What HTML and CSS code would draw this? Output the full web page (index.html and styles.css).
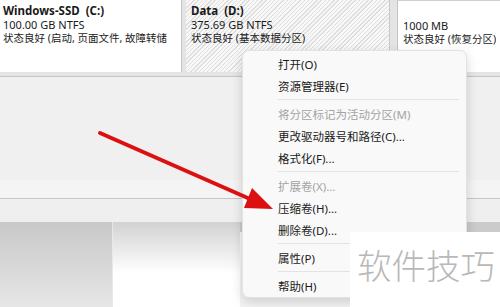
FILE: index.html
```html
<!DOCTYPE html>
<html lang="zh-CN">

<head>
    <meta charset="UTF-8">
    <meta name="viewport" content="width=device-width, initial-scale=1.0">
    <title>磁盘管理</title>
    <link rel="stylesheet" href="styles.css">
</head>

<body>
    <div class="screen">

        <div class="disks">
            <div class="part part-c">
                <div class="name">Windows-SSD&nbsp; (C:)</div>
                <div class="size">100.00 GB NTFS</div>
                <div class="state">状态良好 (启动, 页面文件, 故障转储</div>
            </div>
            <div class="part part-d">
                <div class="name">Data&nbsp; (D:)</div>
                <div class="size">375.69 GB NTFS</div>
                <div class="state">状态良好 (基本数据分区)</div>
            </div>
            <div class="part part-r">
                <div class="name">&nbsp;</div>
                <div class="size">1000 MB</div>
                <div class="state">状态良好 (恢复分区)</div>
            </div>
        </div>

        <div class="panel"></div>
        <div class="band"></div>
        <div class="band2"></div>

        <div class="lower">
            <div class="lower-a"></div>
            <div class="lower-b"></div>
            <div class="lower-c"></div>
        </div>

        <ul class="menu">
            <li class="item">打开(O)</li>
            <li class="item">资源管理器(E)</li>
            <li class="sep"></li>
            <li class="item off">将分区标记为活动分区(M)</li>
            <li class="item">更改驱动器号和路径(C)...</li>
            <li class="item">格式化(F)...</li>
            <li class="sep"></li>
            <li class="item off">扩展卷(X)...</li>
            <li class="item">压缩卷(H)...</li>
            <li class="item">删除卷(D)...</li>
            <li class="sep"></li>
            <li class="item">属性(P)</li>
            <li class="sep"></li>
            <li class="item">帮助(H)</li>
        </ul>

        <div class="watermark">软件技巧</div>

        <svg class="arrow" viewBox="0 0 500 307" width="500" height="307">
            <line x1="100" y1="133" x2="250" y2="199" stroke="#dc1010" stroke-width="4" stroke-linecap="round" />
            <polygon points="273,209 244,208 252,188" fill="#dc1010" />
        </svg>

    </div>
</body>

</html>
```

FILE: styles.css
```css
* {
    box-sizing: border-box;
}

body {
    margin: 0;
    background-color: #f0f0f0;
    font-family: "Noto Sans", "Noto Sans CJK SC", sans-serif;
    color: #1a1a1a;
}

.screen {
    position: relative;
    width: 500px;
    height: 307px;
    overflow: hidden;
}

.disks {
    display: flex;
    height: 77px;
    background-color: #e4e4e4;
    border-bottom: 1px solid #c6c6c6;
}

.part {
    height: 72px;
    padding: 4px 4px 0 4px;
    white-space: nowrap;
    overflow: hidden;
}

.part .name {
    height: 14px;
    font-weight: bold;
    font-size: 11.5px;
    line-height: 14px;
}

.part .size {
    height: 14px;
    font-size: 11px;
    line-height: 14px;
}

.part .state {
    height: 12px;
    font-size: 10.5px;
    line-height: 12px;
    overflow: hidden;
}

.part-c {
    width: 182px;
    padding-left: 3px;
    background-color: #fff;
    border-right: 1px solid #c4c4c4;
}

.part-d {
    width: 204px;
    margin-left: 4px;
    padding-left: 5px;
    background: repeating-linear-gradient(-45deg, #f8f8f8 0 2px, #dedede 2px 3px);
    border-right: 1px solid #c8c8c8;
}

.part-r {
    flex: 1;
    margin-left: 7px;
    padding-left: 5px;
    background-color: #fff;
    border-left: 1px solid #c4c4c4;
    border-top: 1px solid #d0d0d0;
}

.panel {
    height: 103px;
    background-color: #f0f0f0;
}

.band {
    height: 19px;
    background-color: #f4f4f4;
    border-bottom: 1px solid #c6c6c6;
}

.band2 {
    height: 23px;
    background-color: #efefef;
}

.lower {
    display: flex;
    height: 85px;
}

.lower-a {
    width: 113px;
    background: linear-gradient(#c8c8c8, #e6e6e6);
    border-right: 1px solid #e8e8e8;
}

.lower-b {
    width: 127px;
    background: linear-gradient(#d2d2d2, #fff 60%);
}

.lower-c {
    flex: 1;
    background: linear-gradient(#cbcbcb 0 10px, #f4f4f4 10px);
}

.menu {
    position: absolute;
    left: 242px;
    top: 50px;
    width: 225px;
    height: 248px;
    margin: 0;
    padding: 1px 0 0 0;
    list-style: none;
    background-color: #f9f9f9;
    border: 1px solid #e2e2e2;
    border-radius: 7px;
    box-shadow: 0 4px 12px rgba(0, 0, 0, 0.16);
}

.item {
    height: 22px;
    padding: 3px 0 0 35px;
    font-size: 11.5px;
    line-height: 20px;
}

.off {
    color: #a3a3a3;
}

.sep {
    height: 6px;
    margin: 0 7px 0 35px;
    border-top: 3px solid transparent;
    border-bottom: 2px solid transparent;
    background-color: #e3e3e3;
    background-clip: content-box;
}

.watermark {
    position: absolute;
    left: 350px;
    top: 232px;
    width: 150px;
    height: 75px;
    padding: 12px 0 0 7px;
    background-color: #fff;
    color: #b8b8b8;
    font-family: "Noto Sans CJK SC", sans-serif;
    font-weight: 300;
    font-size: 34.5px;
    line-height: 40px;
}

.arrow {
    position: absolute;
    left: 0;
    top: 0;
}
```
